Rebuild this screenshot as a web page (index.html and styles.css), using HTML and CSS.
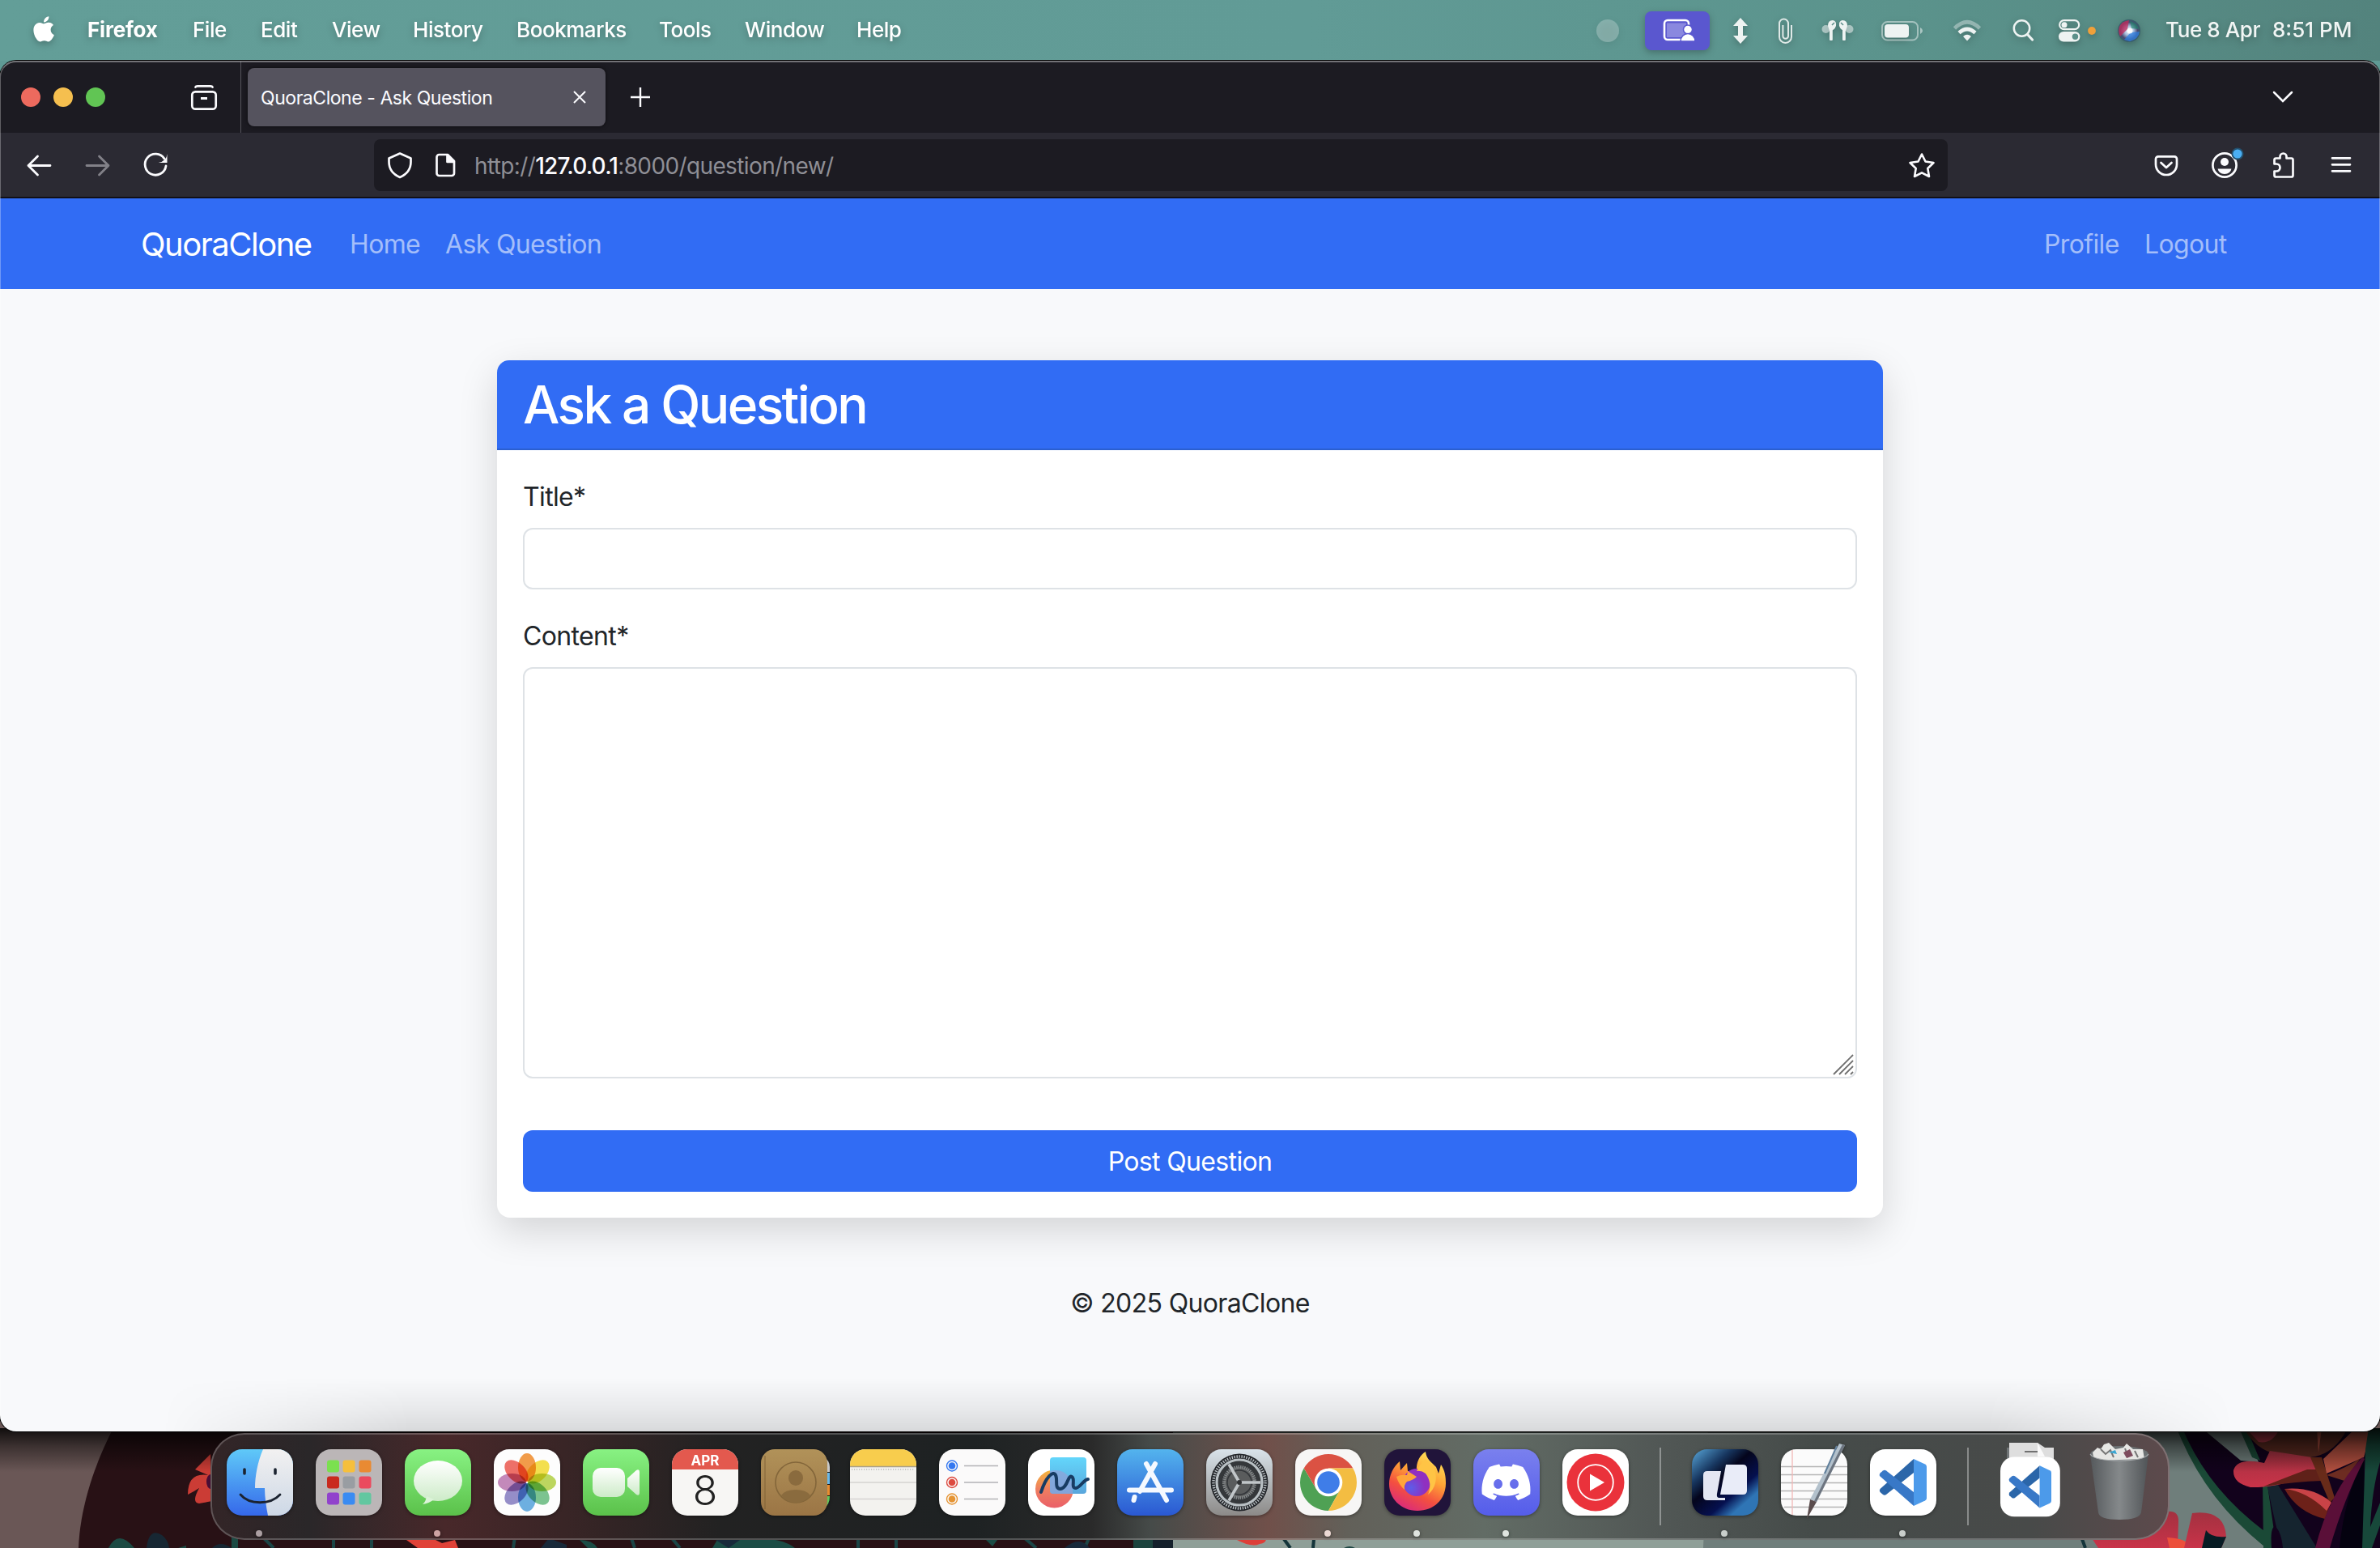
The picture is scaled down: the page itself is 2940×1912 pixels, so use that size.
FILE: index.html
```html
<!DOCTYPE html>
<html lang="en">
<head>
<meta charset="utf-8">
<title>QuoraClone - Ask Question</title>
<link rel="stylesheet" href="styles.css">
</head>
<body>
<div class="desktop">
  <svg class="wallpaper" viewBox="0 1740 2940 172" aria-hidden="true">
    <defs>
      <linearGradient id="shade" x1="0" y1="0" x2="0" y2="1"><stop offset="0" stop-color="#000" stop-opacity=".85"/><stop offset=".4" stop-color="#000" stop-opacity=".45"/><stop offset="1" stop-color="#000" stop-opacity="0"/></linearGradient>
      <linearGradient id="rose" x1="0" y1="0" x2="0" y2="1"><stop offset="0" stop-color="#a33140"/><stop offset="1" stop-color="#c93349"/></linearGradient>
    </defs>
    <rect x="0" y="1740" width="2940" height="172" fill="#6a5756"/>
    <path d="M140 1764C118 1806 99 1860 97 1912H1500V1764Z" fill="#281115"/>
    <path d="M260 1796Q250 1806 241 1815L257 1822Q232 1818 232 1846Q240 1842 246 1838Q236 1856 246 1857L262 1854Z" fill="#cb3c35"/>
    <ellipse cx="260" cy="1830" rx="5" ry="9" fill="#4b0d35"/>
    <path d="M134 1912Q146 1888 166 1912ZM286 1912V1898H294V1912ZM220 1912L230 1909V1912Z" fill="#1c4a43"/>
    <path d="M181 1912Q184 1886 200 1896Q208 1902 209 1912ZM262 1912Q272 1902 286 1912Z" fill="#172733"/>
    <path d="M326 1900L338 1912M412 1900V1912M459 1900V1912M636 1898L634 1912M780 1900L784 1912M830 1900L840 1912M1060 1900V1912M1107 1900V1912M1266 1900L1280 1912M1345 1900L1340 1912" stroke="#1b4546" stroke-width="4"/>
    <path d="M502 1902L516 1912H566L562 1902L546 1906L538 1902Z" fill="#e04238"/>
    <path d="M886 1902Q960 1894 982 1912H880ZM716 1902Q732 1902 738 1912H726ZM1218 1902H1232L1226 1910Z" fill="#1b4c45"/>
    <path d="M668 1912L678 1900L700 1908V1912ZM884 1902H914L900 1912ZM1315 1912Q1334 1896 1346 1912Z" fill="#18293a"/>
    <path d="M1400 1900H1448Q1452 1906 1450 1912H1400Z" fill="#14202b"/><path d="M1400 1900H1424V1912H1400Z" fill="#1c443e"/>
    <path d="M1449 1764H2940V1912H1449Z" fill="#8f9f98"/>
    <path d="M2110 1764H2940V1912H2104Z" fill="#6f7e7b"/>
    <path d="M1526 1901Q1546 1912 1556 1907Q1564 1906 1564 1901Z" fill="#dd3e38"/>
    <path d="M1586 1901L1594 1912M1623 1901L1622 1912M2572 1901L2576 1912" stroke="#14343a" stroke-width="4"/>
    <path d="M1660 1912Q1667 1908 1674 1912Z" fill="#1e4643"/>
    <path d="M2584 1900Q2660 1908 2676 1867Q2692 1865 2691 1880L2690 1912H2592Z" fill="url(#rose)"/>
    <path d="M2677 1899Q2702 1900 2708 1912H2680Z" fill="#ec4f3b"/>
    <path d="M2708 1869Q2748 1864 2750 1898L2744 1912H2698Z" fill="url(#rose)"/>
    <path d="M2725 1890Q2732 1900 2750 1898L2744 1912H2720Z" fill="#071c24"/>
    <path d="M2689 1764H2940V1912H2800Q2724 1846 2689 1764Z" fill="#12021c"/>
    <path d="M2720 1764L2768 1804L2790 1806L2774 1764Z" fill="#6f7e7b"/>
    <path d="M2689 1764H2696Q2728 1842 2804 1896L2797 1910Q2722 1850 2689 1764ZM2766 1764H2775L2792 1804L2782 1800ZM2795 1830L2801 1834L2812 1912H2796Z" fill="#1a4936"/>
    <path d="M2800 1832L2814 1834L2862 1912H2818Q2808 1870 2800 1832Z" fill="#15242f"/>
    <path d="M2806 1912Q2804 1884 2811 1886Q2818 1892 2820 1912Z" fill="#12021c"/>
    <path d="M2772 1764H2900Q2880 1804 2840 1800Q2790 1800 2772 1764Z" fill="#5a2a20"/>
    <path d="M2774 1764H2816Q2808 1784 2790 1781Z" fill="#ad3646"/>
    <path d="M2797 1807L2804 1792L2856 1800L2862 1816Q2820 1838 2780 1837Q2758 1832 2759 1816Q2764 1800 2797 1807Z" fill="url(#rose)"/>
    <path d="M2796 1836Q2826 1824 2850 1815H2864L2868 1829Q2836 1830 2796 1836Z" fill="#5f2119"/>
    <path d="M2854 1800H2868L2884 1850L2878 1856Z" fill="#682b19"/>
    <path d="M2862 1764H2868L2864 1794ZM2910 1764H2930L2920 1800L2874 1820L2870 1802Z" fill="#b35040"/>
    <path d="M2874 1822Q2900 1812 2916 1801L2896 1829Z" fill="#6d2c21"/>
    <path d="M2822 1839Q2838 1868 2872 1876L2880 1854Q2854 1838 2822 1839Z" fill="#6d2119"/>
    <path d="M2822 1839Q2858 1836 2880 1856L2874 1866Q2850 1842 2822 1839Z" fill="#c94347"/>
    <path d="M2890 1912Q2896 1850 2920 1801L2922 1912Z" fill="#04020f"/>
    <path d="M2860 1912Q2878 1842 2918 1800L2921 1802Q2896 1850 2878 1912Z" fill="#5a0f38"/>
    <path d="M2918 1912L2922 1790L2926 1764H2940V1806Q2930 1840 2928 1886L2940 1856V1884L2930 1912Z" fill="#17483a"/>
    <rect x="0" y="1764" width="2940" height="54" fill="url(#shade)"/>
  </svg>

  <header class="menubar">
    <svg class="apple" viewBox="0 0 108 74"><path transform="translate(38.500 19.300) scale(1.300)" fill="#fff" d="M12.152 6.896c-.948 0-2.415-1.078-3.96-1.04-2.04.027-3.91 1.183-4.961 3.014-2.117 3.675-.546 9.103 1.519 12.09 1.013 1.454 2.208 3.09 3.792 3.039 1.52-.065 2.09-.987 3.935-.987 1.831 0 2.35.987 3.96.948 1.637-.026 2.676-1.48 3.676-2.948 1.156-1.688 1.636-3.325 1.662-3.415-.039-.013-3.182-1.221-3.22-4.857-.026-3.04 2.48-4.494 2.597-4.559-1.429-2.09-3.623-2.324-4.39-2.376-2-.156-3.675 1.09-4.61 1.09zM15.53 3.83c.843-1.012 1.4-2.427 1.245-3.83-1.207.052-2.662.805-3.532 1.818-.78.896-1.454 2.338-1.273 3.714 1.338.104 2.715-.688 3.559-1.701"/></svg>
    <nav class="menus">
      <span class="app-name">Firefox</span><span>File</span><span>Edit</span><span>View</span><span>History</span><span>Bookmarks</span><span>Tools</span><span>Window</span><span>Help</span>
    </nav>
    <div class="status">
      <svg width="52" height="74" viewBox="1960 0 52 74"><circle cx="1986" cy="37" r="14" fill="#fff" opacity=".25"/></svg>
      <svg width="120" height="74" viewBox="2012 0 120 74"><rect x="2032" y="13" width="80" height="48" rx="8" fill="#5a57cf"/><path d="M2078 48H2060a4 4 0 0 1-4-4V28a4 4 0 0 1 4-4H2082a4 4 0 0 1 4 4V31" fill="none" stroke="#fff" stroke-width="2.600"/><rect x="2059" y="27.500" width="24" height="17.500" fill="#8a88df"/><circle cx="2085" cy="35.500" r="5.500" fill="#fff" stroke="#5a57cf" stroke-width="1.500"/><path d="M2076 50a9 9.500 0 0 1 18 0Z" fill="#fff" stroke="#5a57cf" stroke-width="1.500"/></svg>
      <svg width="38" height="74" viewBox="2132 0 38 74"><path d="M2150 21L2159 31H2153V43H2159L2150 53L2141 43H2147V31H2141Z" fill="#eef3f2"/></svg>
      <svg width="60" height="74" viewBox="2170 0 60 74"><path d="M2213 30V44.500a7.500 7.500 0 0 1-15 0V28a5.500 5.500 0 0 1 11 0V43.500a3.300 3.300 0 0 1-6.600 0V30" fill="none" stroke="#dfe9e7" stroke-width="2"/></svg>
      <svg width="78" height="74" viewBox="2230 0 78 74"><g fill="#eef3f2"><circle cx="2255.500" cy="35" r="5" opacity=".55"/><circle cx="2284.500" cy="35" r="5" opacity=".55"/><path d="M2258 31Q2258 24 2264 24Q2269 25 2268 31Q2266 37 2260 37ZM2282 31Q2282 24 2276 24Q2271 25 2272 31Q2274 37 2280 37Z"/><rect x="2260" y="35" width="3.800" height="14" rx="1"/><rect x="2276" y="35" width="3.800" height="14" rx="1"/></g><path d="M2263 30L2266 27M2277 30L2274 27" stroke="#5f8f8a" stroke-width="1.600"/></svg>
      <svg width="86" height="74" viewBox="2308 0 86 74"><rect x="2325" y="26" width="44" height="22.500" rx="6.500" fill="none" stroke="#fff" stroke-opacity=".45" stroke-width="2"/><rect x="2328" y="29" width="30" height="16.500" rx="4" fill="#eef3f2"/><path d="M2372 33q3 1.500 3 4t-3 4Z" fill="#fff" opacity=".5"/></svg>
      <svg width="72" height="74" viewBox="2394 0 72 74"><g fill="none" stroke="#eef3f2" stroke-width="4.600"><path d="M2414.500 34Q2430 18.500 2445.500 34" opacity=".4"/><path d="M2420 39.500Q2430 30.500 2440 39.500"/></g><path d="M2425 44Q2430 39.500 2435 44L2430 49.500Z" fill="#eef3f2"/></svg>
      <svg width="62" height="74" viewBox="2466 0 62 74"><g fill="none" stroke="#eef3f2" stroke-linecap="round"><circle cx="2497.500" cy="34" r="9.700" stroke-width="2.500"/><path d="M2504.500 41.500L2510.500 48" stroke-width="3.200"/></g></svg>
      <svg width="76" height="74" viewBox="2528 0 76 74"><rect x="2544.200" y="24.200" width="24" height="11" rx="5.500" fill="none" stroke="#eef3f2" stroke-width="2.200"/><circle cx="2550" cy="29.700" r="3.500" fill="#eef3f2"/><rect x="2543" y="38" width="26.400" height="12.500" rx="6.200" fill="#eef3f2"/><circle cx="2563.500" cy="44.200" r="3.700" fill="#5b908a"/><circle cx="2584" cy="37" r="4.900" fill="#f0a03a"/></svg>
      <svg width="73" height="74" viewBox="2604 0 73 74"><defs><radialGradient id="siri"><stop offset="0" stop-color="#fff"/><stop offset=".4" stop-color="#a9bfdc"/><stop offset=".75" stop-color="#4a4a72"/><stop offset="1" stop-color="#35606a"/></radialGradient></defs><circle cx="2630" cy="37" r="14" fill="url(#siri)"/><path d="M2618 32Q2621 25 2630 24L2628 35L2619 44Q2616 38 2618 32Z" fill="#c22b5c" opacity=".75"/><path d="M2632 39L2643 38Q2642 47 2631 50L2624 48Z" fill="#2d7fe0" opacity=".75"/><path d="M2631 25Q2641 28 2642 35L2633 34Z" fill="#1a8a6a" opacity=".6"/><circle cx="2631" cy="37" r="3.500" fill="#fff" opacity=".85"/></svg>
    </div>
    <time class="clock"><span class="date">Tue 8 Apr</span><span class="hour">8:51 PM</span></time>
  </header>

  <main class="window">
    <div class="tabstrip">
      <div class="lights"><i class="close"></i><i class="min"></i><i class="max"></i></div>
      <svg class="view" width="38" height="36" viewBox="233 102 38 36"><g fill="none" stroke="#fbfbfe" stroke-width="2.700" stroke-linecap="round"><rect x="237.300" y="113.300" width="29.400" height="21.400" rx="4"/><path d="M241.500 107.500Q242 106.300 244 106.300H260Q262 106.300 262.500 107.500"/></g><rect x="248" y="120" width="8" height="3" fill="#fbfbfe"/></svg>
      <div class="tab"><span class="tab-title">QuoraClone - Ask Question</span><svg width="18" height="18" viewBox="0 0 18 18"><path d="M2 2L16 16M16 2L2 16" stroke="#fbfbfe" stroke-width="2"/></svg></div>
      <svg class="plus" width="24" height="24" viewBox="0 0 24 24"><path d="M12 0V24M0 12H24" stroke="#fbfbfe" stroke-width="2.400"/></svg>
      <svg class="chev" width="28" height="16" viewBox="0 0 28 16"><path d="M3 2L14 13L25 2" fill="none" stroke="#fbfbfe" stroke-width="2.500" stroke-linecap="round"/></svg>
    </div>
    <div class="toolbar">
      <svg width="462" height="80" viewBox="0 164 462 80"><g fill="none" stroke="#fbfbfe" stroke-width="2.800" stroke-linecap="round" stroke-linejoin="round"><path d="M62 204.500H35M46.500 193L35 204.500L46.500 216"/><path d="M107 204.500H134M122.500 193L134 204.500L122.500 216" opacity=".42"/><path d="M203 196A13 13 0 1 0 205 205"/></g><path d="M206.500 190V201H195.500Q206 199 206.500 190Z" fill="#fbfbfe"/></svg>
      <div class="urlbar">
        <svg width="124" height="64" viewBox="462 172 124 64"><g fill="none" stroke="#fbfbfe" stroke-width="2.700" stroke-linejoin="round"><path d="M494 189.500L507.500 195.500V200C507.500 209 503 215 494 219C485 215 480.500 209 480.500 200V195.500Z"/><path d="M539.500 194a3 3 0 0 1 3-3H553L561 199V214a3 3 0 0 1-3 3H542.500a3 3 0 0 1-3-3Z"/><path d="M552.500 191V200H561" fill="#fbfbfe"/></g></svg>
        <span class="url">http://<b>127.0.0.1</b>:8000/question/new/</span>
        <svg class="star" width="36" height="36" viewBox="2356 186 36 36"><path d="M2374 190.500L2378.500 199.500L2388.500 201L2381.300 208L2383 218L2374 213.300L2365 218L2366.700 208L2359.500 201L2369.500 199.500Z" fill="none" stroke="#fbfbfe" stroke-width="2.600" stroke-linejoin="round"/></svg>
      </div>
      <svg width="534" height="80" viewBox="2406 164 534 80"><g fill="none" stroke="#fbfbfe" stroke-width="2.700" stroke-linecap="round" stroke-linejoin="round"><path d="M2666 193.300H2686a3 3 0 0 1 3 3V203a13 13 0 0 1-26 0V196.300a3 3 0 0 1 3-3ZM2669.500 201L2676 207L2682.500 201"/><circle cx="2748" cy="204" r="14.600"/><path d="M2809.500 200V197.500a2 2 0 0 1 2-2H2816.500V193.500a4 4 0 0 1 8 0V195.500H2830.500a2 2 0 0 1 2 2V216.500a2 2 0 0 1-2 2H2811.500a2 2 0 0 1-2-2V211.500H2812a4.500 4.500 0 0 0 0-9H2809.500Z"/><path d="M2881 195.300H2903M2881 203.300H2903M2881 211.300H2903"/></g><circle cx="2748" cy="200" r="5" fill="#fbfbfe"/><path d="M2739.500 208.500H2756.500Q2755 215 2748 215T2739.500 208.500Z" fill="#fbfbfe"/><circle cx="2764" cy="190" r="7.500" fill="#23506e"/><circle cx="2764" cy="190" r="5.600" fill="#4aaef3"/></svg>
    </div>
    <nav class="navbar">
      <a class="brand">QuoraClone</a><a class="home">Home</a><a class="ask">Ask Question</a>
      <a class="profile">Profile</a><a class="logout">Logout</a>
    </nav>
    <section class="content">
      <form class="card">
        <div class="card-head"><h2>Ask a Question</h2></div>
        <div class="card-body">
          <label>Title*</label>
          <div class="input"></div>
          <label>Content*</label>
          <div class="textarea"><svg width="26" height="26" viewBox="0 0 26 26"><path d="M1 25L25 1M8 25L25 8M15 25L25 15M22 25L25 22" stroke="#6f6f6f" stroke-width="1.900"/></svg></div>
          <div class="button"><span>Post Question</span></div>
        </div>
      </form>
      <footer><span>© 2025 QuoraClone</span></footer>
    </section>
    <div class="dock-shade"></div>
  </main>

  <div class="dock">
    <svg class="app" viewBox="0 0 82 82"><defs><linearGradient id="fb" x1="0" y1="0" x2="0" y2="1"><stop offset="0" stop-color="#5fc9f8"/><stop offset="1" stop-color="#3568ea"/></linearGradient><linearGradient id="fw" x1="0" y1="0" x2="0" y2="1"><stop offset="0" stop-color="#f2f1f1"/><stop offset="1" stop-color="#cdd8e6"/></linearGradient><clipPath id="sq"><rect width="82" height="82" rx="19"/></clipPath></defs><g clip-path="url(#sq)"><rect width="82" height="82" fill="url(#fb)"/><path d="M45 0C38 16 35 34 35 48H47C47 60 49 72 51 82H82V0Z" fill="url(#fw)"/></g><g stroke="#1b2330" stroke-linecap="round" fill="none"><path d="M22 25V30M60 25V30" stroke-width="3.600"/><path d="M17 56C28 69 54 69 66 56" stroke-width="2.800"/></g><circle cx="40" cy="104" r="4" fill="#ab9fa2"/></svg>
    <svg class="app" viewBox="0 0 82 82"><rect width="82" height="82" rx="19" fill="#bbb6b7"/><g><rect x="14" y="13.500" width="15" height="15" rx="3" fill="#7be04f"/><rect x="33.500" y="13.500" width="15" height="15" rx="3" fill="#f6bf3c"/><rect x="53.500" y="13.500" width="15" height="15" rx="3" fill="#e98a32"/><rect x="14" y="33.500" width="15" height="15" rx="3" fill="#c92a1e"/><rect x="33.500" y="33.500" width="15" height="15" rx="3" fill="#999da2"/><rect x="53.500" y="33.500" width="15" height="15" rx="3" fill="#ea4a5e"/><rect x="14" y="53.500" width="15" height="15" rx="3" fill="#9142cc"/><rect x="33.500" y="53.500" width="15" height="15" rx="3" fill="#3a8bf2"/><rect x="53.500" y="53.500" width="15" height="15" rx="3" fill="#62c7a0"/></g></svg>
    <svg class="app" viewBox="0 0 82 82"><defs><linearGradient id="green" x1="0" y1="0" x2="0" y2="1"><stop offset="0" stop-color="#88f283"/><stop offset="1" stop-color="#5bc14a"/></linearGradient><linearGradient id="bub" x1="0" y1="0" x2="0" y2="1"><stop offset="0" stop-color="#fff"/><stop offset="1" stop-color="#cdebc8"/></linearGradient></defs><rect width="82" height="82" rx="19" fill="url(#green)"/><ellipse cx="41" cy="39" rx="30" ry="25" fill="url(#bub)"/><path d="M27 58Q26 65 22 68Q30 67 36 62Z" fill="#dcf3d8"/><circle cx="40" cy="104" r="4" fill="#cda3a3"/></svg>
    <svg class="app" viewBox="0 0 82 82"><rect width="82" height="82" rx="19" fill="#fdfdfd"/><g class="petals"><ellipse cx="41" cy="22.500" rx="11" ry="17.500" fill="#f2953a"/><ellipse cx="41" cy="22.500" rx="11" ry="17.500" fill="#f5df3f" transform="rotate(45 41 41)"/><ellipse cx="41" cy="22.500" rx="11" ry="17.500" fill="#b9d552" transform="rotate(90 41 41)"/><ellipse cx="41" cy="22.500" rx="11" ry="17.500" fill="#72c088" transform="rotate(135 41 41)"/><ellipse cx="41" cy="22.500" rx="11" ry="17.500" fill="#62abe0" transform="rotate(180 41 41)"/><ellipse cx="41" cy="22.500" rx="11" ry="17.500" fill="#8d85c6" transform="rotate(225 41 41)"/><ellipse cx="41" cy="22.500" rx="11" ry="17.500" fill="#c080b6" transform="rotate(270 41 41)"/><ellipse cx="41" cy="22.500" rx="11" ry="17.500" fill="#ee655c" transform="rotate(315 41 41)"/></g></svg>
    <svg class="app" viewBox="0 0 82 82"><rect width="82" height="82" rx="19" fill="url(#green)"/><rect x="12" y="23" width="40" height="36" rx="10" fill="url(#bub)"/><path d="M55 36L66 26Q70 24 70 28V54Q70 58 66 56L55 46Z" fill="url(#bub)"/></svg>
    <svg class="app" viewBox="0 0 82 82"><rect width="82" height="82" rx="19" fill="#f7f6f4"/><path d="M0 25V19A19 19 0 0 1 19 0H63A19 19 0 0 1 82 19V25Z" fill="#e3594e"/><text x="41" y="19.500" text-anchor="middle" class="cal-m">APR</text><text x="41" y="69" text-anchor="middle" class="cal-d">8</text></svg>
    <svg class="app" viewBox="0 0 82 82"><defs><linearGradient id="ct" x1="0" y1="0" x2="0" y2="1"><stop offset="0" stop-color="#b19259"/><stop offset="1" stop-color="#9b7545"/></linearGradient></defs><path d="M78 10Q85 14 85 22V28H78Z" fill="#c9c9c9"/><path d="M78 29H85V43H78Z" fill="#69b9ea"/><path d="M78 44H85V57H78Z" fill="#ea8c2f"/><path d="M78 58H85Q85 68 78 73Z" fill="#61c95b"/><rect width="82" height="82" rx="17" fill="url(#ct)"/><path d="M5 8V74" stroke="#7d5f34" stroke-width="1.500" opacity=".6"/><circle cx="43" cy="41" r="25" fill="none" stroke="#83663a" stroke-width="1.600"/><ellipse cx="43" cy="35.500" rx="9" ry="9.500" fill="#8a6b3e"/><path d="M25 57Q30 50 43 50T61 57Q54 66 43 66T25 57Z" fill="#8a6b3e"/></svg>
    <svg class="app" viewBox="0 0 82 82"><rect width="82" height="82" rx="19" fill="#f3f2ef"/><path d="M0 21V19A19 19 0 0 1 19 0H63A19 19 0 0 1 82 19V21Z" fill="#f8cd4d"/><path d="M0 21.500H82" stroke="#a8a08a" stroke-width="1.400"/><path d="M2 25H80" stroke="#bbb" stroke-width="1.600" stroke-dasharray="1.200 1.800"/><path d="M0 41H82M0 61.500H82" stroke="#d5d4d1" stroke-width="1.500"/></svg>
    <svg class="app" viewBox="0 0 82 82"><rect width="82" height="82" rx="19" fill="#fbfafa"/><path d="M31 20.500H73M31 41H73M31 61.500H73" stroke="#b3b3b6" stroke-width="1.300"/><g stroke-width="1.400"><g fill="none"><circle cx="16" cy="20.500" r="6.500" stroke="#3377f0"/><circle cx="16" cy="41" r="6.500" stroke="#dd4b40"/><circle cx="16" cy="61.500" r="6.500" stroke="#e59433"/></g><circle cx="16" cy="20.500" r="4.300" fill="#3377f0"/><circle cx="16" cy="41" r="4.300" fill="#dd4b40"/><circle cx="16" cy="61.500" r="4.300" fill="#e59433"/></g></svg>
    <svg class="app" viewBox="0 0 82 82"><defs><linearGradient id="ffa" x1="0" y1="0" x2="0" y2="1"><stop offset="0" stop-color="#f4b63c"/><stop offset=".5" stop-color="#ef7f60"/><stop offset="1" stop-color="#ea5f68"/></linearGradient><linearGradient id="ffc" x1="0" y1="0" x2="0" y2="1"><stop offset="0" stop-color="#63d6fb"/><stop offset="1" stop-color="#5aa6dc"/></linearGradient></defs><rect width="82" height="82" rx="19" fill="#fff"/><circle cx="32.500" cy="49" r="23.500" fill="url(#ffa)"/><rect x="27" y="10" width="45" height="45" rx="4" fill="url(#ffc)"/><path d="M27 27Q46 22 55 42V55H31Q27 55 27 51Z" fill="#8fa3d8" opacity=".75"/><path d="M16 53C22 34 31 26 34 32C37 38 32 49 40 49C49 48 49 31 54 34C59 37 52 48 59 48C65 47 68 38 74 37" fill="none" stroke="#183c63" stroke-width="4" stroke-linecap="round"/></svg>
    <svg class="app" viewBox="0 0 82 82"><defs><linearGradient id="as" x1="0" y1="0" x2="0" y2="1"><stop offset="0" stop-color="#53b4ee"/><stop offset="1" stop-color="#2a58d2"/></linearGradient></defs><rect width="82" height="82" rx="19" fill="url(#as)"/><g stroke="#f5f9ff" stroke-width="6" stroke-linecap="round"><path d="M47 18L28 52M36 18L61 63M15 50.500H67M21.500 59L20.500 63"/></g></svg>
    <svg class="app" viewBox="0 0 82 82"><defs><linearGradient id="st" x1="0" y1="0" x2="0" y2="1"><stop offset="0" stop-color="#d9e3ea"/><stop offset="1" stop-color="#8c8a88"/></linearGradient></defs><rect width="82" height="82" rx="19" fill="url(#st)"/><circle cx="41" cy="41" r="35.500" fill="#23262a"/><circle cx="41" cy="41" r="32" fill="none" stroke="#b9bfc3" stroke-width="3.500" stroke-dasharray="1.400 1.600"/><circle cx="41" cy="41" r="28" fill="#34373a" stroke="#b9c0c4" stroke-width="3.200"/><circle cx="41" cy="41" r="19" fill="#5a5c5d" stroke="#85898b" stroke-width="4" stroke-dasharray="1.500 1"/><circle cx="41" cy="41" r="15" fill="none" stroke="#33363a" stroke-width="1.500"/><path d="M41 41H67M41 41L28 18.500M41 41L28 63.500" stroke="#c1c6c9" stroke-width="3.600"/><circle cx="41" cy="41" r="3" fill="#303234"/></svg>
    <svg class="app" viewBox="0 0 82 82"><rect width="82" height="82" rx="19" fill="#f7f6f5"/><path d="M41 41L26 49L10.700 23.500A35 35 0 0 0 41 76L56 49Z" fill="#4fa154"/><path d="M41 41L10.700 23.500A35 35 0 0 1 71.300 23.500H41Z" fill="#db5243"/><path d="M41 23.500H71.300A35 35 0 0 1 41 76L56 49Z" fill="#f3bd42"/><path d="M10.700 23.500L26 49L41 30V23.500Z" fill="#db5243"/><circle cx="41" cy="41" r="17.300" fill="#fff"/><circle cx="41" cy="41" r="13.800" fill="#3f7de8"/><circle cx="40" cy="104" r="4" fill="#ecd9d4"/></svg>
    <svg class="app" viewBox="0 0 82 82"><defs><linearGradient id="fx" x1=".8" y1="0" x2=".3" y2="1"><stop offset="0" stop-color="#ffe85a"/><stop offset=".4" stop-color="#ffa436"/><stop offset=".7" stop-color="#f4503f"/><stop offset="1" stop-color="#d92a7c"/></linearGradient><radialGradient id="fp" cx=".3" cy=".7"><stop offset="0" stop-color="#5e5ce8"/><stop offset="1" stop-color="#9030c0"/></radialGradient></defs><rect width="82" height="82" rx="19" fill="#21143a"/><path d="M41 76C20 76 6 60 6 43C6 32 11 22 19 15L20 26L28 17L29 27H40C39 16 44 7 51 3C52 12 57 15 64 22L67 30L70 19C75 26 76 34 76 42C76 62 61 76 41 76Z" fill="url(#fx)"/><path d="M29 27Q34 24 40 27Q42 15 51 9V30Z" fill="#21143a" opacity="0"/><circle cx="40" cy="41" r="17" fill="url(#fp)"/><path d="M15 34Q20 31 28 32L29 27L40 34Q36 38 28 40Q24 44 25 50Q18 44 15 34Z" fill="#ffa53a"/><path d="M40 27Q44 18 51 12L62 24Q68 44 54 56Q60 42 51 30Q46 26 40 27Z" fill="#ffc445"/><circle cx="40" cy="104" r="4" fill="#dfe4df"/></svg>
    <svg class="app" viewBox="0 0 82 82"><defs><linearGradient id="dc" x1="0" y1="0" x2="0" y2="1"><stop offset="0" stop-color="#7a80ee"/><stop offset="1" stop-color="#555dea"/></linearGradient></defs><rect width="82" height="82" rx="19" fill="url(#dc)"/><path transform="translate(10.500 11.500) scale(2.500 2.430)" fill="#fff" d="M20.317 4.3698a19.7913 19.7913 0 00-4.8851-1.5152.0741.0741 0 00-.0785.0371c-.211.3753-.4447.8648-.6083 1.2495-1.8447-.2762-3.68-.2762-5.4868 0-.1636-.3933-.4058-.8742-.6177-1.2495a.077.077 0 00-.0785-.037 19.7363 19.7363 0 00-4.8852 1.515.0699.0699 0 00-.0321.0277C.5334 9.0458-.319 13.5799.0992 18.0578a.0824.0824 0 00.0312.0561c2.0528 1.5076 4.0413 2.4228 5.9929 3.0294a.0777.0777 0 00.0842-.0276c.4616-.6304.8731-1.2952 1.226-1.9942a.076.076 0 00-.0416-.1057c-.6528-.2476-1.2743-.5495-1.8722-.8923a.077.077 0 01-.0076-.1277c.1258-.0943.2517-.1923.3718-.2914a.0743.0743 0 01.0776-.0105c3.9278 1.7933 8.18 1.7933 12.0614 0a.0739.0739 0 01.0785.0095c.1202.099.246.1981.3728.2924a.077.077 0 01-.0066.1276 12.2986 12.2986 0 01-1.873.8914.0766.0766 0 00-.0407.1067c.3604.698.7719 1.3628 1.225 1.9932a.076.076 0 00.0842.0286c1.961-.6067 3.9495-1.5219 6.0023-3.0294a.077.077 0 00.0313-.0552c.5004-5.177-.8382-9.6739-3.5485-13.6604a.061.061 0 00-.0312-.0286zM8.02 15.3312c-1.1825 0-2.1569-1.0857-2.1569-2.419 0-1.3332.9555-2.4189 2.157-2.4189 1.2108 0 2.1757 1.0952 2.1568 2.419 0 1.3332-.9555 2.4189-2.1569 2.4189zm7.9748 0c-1.1825 0-2.1569-1.0857-2.1569-2.419 0-1.3332.9554-2.4189 2.1569-2.4189 1.2108 0 2.1757 1.0952 2.1568 2.419 0 1.3332-.946 2.4189-2.1568 2.4189Z"/><circle cx="40" cy="104" r="4" fill="#dfe4df"/></svg>
    <svg class="app" viewBox="0 0 82 82"><rect width="82" height="82" rx="19" fill="#fff"/><circle cx="41" cy="41" r="35.500" fill="#ea323b"/><circle cx="41" cy="41" r="21.800" fill="none" stroke="#fff" stroke-width="1.800"/><path d="M34 30.500V51.500L52 41Z" fill="#fff"/></svg>
    <i class="rule"></i>
    <svg class="app" viewBox="0 0 82 82"><defs><linearGradient id="mir" x1="0" y1=".1" x2=".7" y2=".9"><stop offset="0" stop-color="#4d93c4"/><stop offset=".3" stop-color="#17365f"/><stop offset=".5" stop-color="#04051c"/><stop offset=".8" stop-color="#05104f"/><stop offset="1" stop-color="#2f75b5"/></linearGradient></defs><rect width="82" height="82" rx="19" fill="url(#mir)"/><path d="M19 27H36L31 55Q30 60 34 60H41V63H19Q14 63 14 58V32Q14 27 19 27Z" fill="#e4e7f3"/><path d="M42 19H63Q68 19 68 24V51Q68 56 63 56H35Z" fill="#e9ecf8"/><circle cx="40" cy="104" r="4" fill="#c9cecb"/></svg>
    <svg class="app" viewBox="0 0 82 82"><rect width="82" height="82" rx="19" fill="#fbfbfb"/><path d="M0 21.500H82M0 31.500H82M0 41.500H82M0 51.500H82M0 61.500H82M4 71.500H78" stroke="#b5b5b5" stroke-width="1.300"/><path d="M14 1V81" stroke="#f2b7b5" stroke-width="1.300"/><path d="M72-7L79-5L44 65L36 62Z" fill="#b3c1cc"/><path d="M76-6L79-5L44 65L41 64Z" fill="#6d7580"/><path d="M36 62L44 65L32 86Z" fill="#5b4d4e"/><path d="M69-4L54 30" stroke="#62809c" stroke-width="2"/></svg>
    <svg class="app" viewBox="0 0 82 82"><g id="code"><rect width="82" height="82" rx="19" fill="#fff"/><path d="M54 12V29L20 56Q18 57.500 16 56L12.500 53Q11 51 12.500 49Z" fill="#2b66a9"/><path d="M54 70V53L20 26.500Q18 25 16 26.500L12.500 29.500Q11 31.500 12.500 33.500Z" fill="#3878c7"/><path d="M54 12L68 18.500Q70 19.500 70 21.500V60.500Q70 62.500 68 63.500L54 70Z" fill="#4c9aea"/></g><circle cx="40" cy="104" r="4" fill="#c9cecb"/></svg>
    <i class="rule"></i>
    <svg class="mini" viewBox="0 0 74 92"><path d="M8 6H48V30H8Z" fill="#707577"/><path d="M11 0H46L55 6H66V30H11Z" fill="#dedede"/><path d="M46 0L55 17H46Z" fill="#fafafa"/><path d="M30 11H46" stroke="#555" stroke-width="1.600"/><g transform="translate(0 17.500) scale(.9)"><use href="#code"/></g></svg>
    <svg class="trash" viewBox="0 0 74 96"><defs><linearGradient id="tr"><stop offset="0" stop-color="#55595c"/><stop offset=".5" stop-color="#85898b"/><stop offset="1" stop-color="#505457"/></linearGradient></defs><ellipse cx="37" cy="14" rx="36" ry="10" fill="#6c7173"/><path d="M4 12L10 6L14 8L18 2L24 0L32 8L42 6L46 1L54 8L66 8L68 20L6 22Z" fill="#e6e6e4"/><path d="M14 8L20 14L26 9L30 18M44 7L48 18M56 10L60 18" stroke="#777" stroke-width="2" fill="none"/><path d="M24 12L32 9L34 14Z" fill="#3ca6d2"/><path d="M42 12L50 8L54 16L46 19Z" fill="#7d4b5d"/><path d="M1 14Q6 22 37 22T73 14L64 86Q62 95 37 95T11 86Z" fill="url(#tr)"/><path d="M1 14Q6 22 37 22T73 14" fill="none" stroke="#a9adaf" stroke-width="1.200"/></svg>
  </div>
</div>
</body>
</html>
```
FILE: styles.css
```css
* { box-sizing: border-box; }
body { margin: 0; font-family: Inter, "Liberation Sans", sans-serif; }
svg { display: block; flex: none; }
.desktop { position: relative; width: 2940px; height: 1912px; overflow: hidden; background: #5f9a95; }
.wallpaper { position: absolute; left: 0; top: 1740px; width: 2940px; height: 172px; }

.menubar { display: flex; align-items: center; height: 75px; background: linear-gradient(90deg, #639e98 0, #619b96 55%, #5b938c 80%, #53837d 100%); color: #fff; font-size: 26px; font-weight: 500; white-space: nowrap; }
.menubar svg, .menus, .clock { filter: drop-shadow(0 3px 4px rgba(0, 0, 0, .25)); }
.apple { width: 108px; height: 74px; }
.menus { display: grid; grid-template-columns: 130px 84px 88px 100px 128px 176px 106px 138px 60px; width: 1852px; padding-bottom: 2px; letter-spacing: -.45px; }
.app-name { font-weight: 700; letter-spacing: -.2px; }
.status { display: flex; width: 715px; }
.clock { display: flex; padding-bottom: 2px; color: #f1f5f4; letter-spacing: -.4px; }
.date { width: 132px; }
.hour { letter-spacing: 0; }

.window { position: relative; height: 1693px; background: #f8f9fb; border-radius: 20px; overflow: hidden; box-shadow: 0 0 0 1px #000; }
.window::after { content: ""; position: absolute; inset: 0; border: 1px solid rgba(255, 255, 255, .3); border-top: 2px solid rgba(255, 255, 255, .38); border-bottom: 0; border-radius: 20px; }
.tabstrip { display: flex; align-items: center; height: 89px; background: #1c1b22; }
.lights { display: flex; gap: 16px; margin-left: 26px; width: 207px; }
.lights i { width: 24px; height: 24px; border-radius: 50%; }
.close { background: #ed6a5e; }
.min { background: #f5bf4f; }
.max { background: #61c554; }
.view { margin-right: 26px; }
.tab { position: relative; display: flex; align-items: center; justify-content: space-between; width: 442px; height: 72px; padding: 0 23px 0 16px; margin-left: 9px; border-radius: 8px; background: #55535e; color: #fbfbfe; font-size: 23px; box-shadow: 0 0 5px rgba(0, 0, 0, .6); white-space: nowrap; }
.tab-title { padding-top: 3px; letter-spacing: -.45px; }
.tab::before { content: ""; position: absolute; left: -9px; top: -8px; width: 1px; height: 88px; background: #55545c; }
.plus { margin-left: 31px; }
.chev { margin-left: 2003px; }
.toolbar { display: flex; align-items: center; height: 81px; background: #2b2a33; border-bottom: 2px solid #111017; }
.urlbar { display: flex; align-items: center; width: 1944px; height: 64px; border-radius: 8px; background: #1c1b22; color: #8f8f96; font-size: 28px; }
.url { padding-top: 2px; letter-spacing: -.62px; }
.urlbar b { font-weight: 500; color: #fbfbfe; letter-spacing: -.8px; }
.star { margin-left: auto; margin-right: 14px; }

.navbar { display: flex; align-items: center; height: 112px; padding: 0 190px 0 174px; background: #316cf4; color: rgba(255, 255, 255, .56); font-size: 32px; letter-spacing: -.64px; white-space: nowrap; }
.brand { width: 258px; color: #fff; font-size: 40px; letter-spacing: -1.5px; }
.home { width: 118px; }
.profile { margin-left: auto; width: 124px; }
.logout { width: 101px; }

.content { display: flex; flex-direction: column; align-items: center; padding-top: 88px; color: #212529; font-size: 32px; letter-spacing: -.64px; }
.card { width: 1712px; height: 1059px; border-radius: 16px; background: #fff; box-shadow: 0 16px 48px rgba(0, 0, 0, .15); }
.card-head { height: 111px; padding: 16px 32px; border-radius: 15px 15px 0 0; border-bottom: 2px solid #2b5fd0; background: #316cf4; color: #fff; }
h2 { margin: 0; font-size: 64px; line-height: 78px; font-weight: 550; letter-spacing: -2.6px; white-space: nowrap; }
.card-body { display: flex; flex-direction: column; padding: 32px; }
label { line-height: 48px; padding-top: 2px; margin-bottom: 14px; align-self: flex-start; }
.input { height: 76px; margin-bottom: 32px; border: 2px solid #dee2e6; border-radius: 12px; }
.textarea { display: flex; align-items: flex-end; justify-content: flex-end; height: 508px; padding: 2px; margin-bottom: 64px; border: 2px solid #dee2e6; border-radius: 12px; }
.button { display: flex; align-items: center; justify-content: center; height: 76px; border-radius: 12px; background: #316cf4; color: #fff; }
footer { margin-top: 82px; line-height: 48px; }
.dock-shade { position: absolute; left: 200px; bottom: 0; width: 2560px; height: 66px; background: linear-gradient(0deg, rgba(0, 0, 0, .125), rgba(0, 0, 0, .06) 45%, transparent); mask-image: linear-gradient(90deg, transparent, #000 12%, #000 88%, transparent); }

.dock { position: absolute; left: 260px; top: 1770px; display: flex; align-items: flex-start; width: 2420px; height: 132px; padding: 18px 0 0 18px; border: 2px solid rgba(255, 255, 255, .22); border-radius: 42px; background: linear-gradient(90deg, #332527 0, #2a2729 5%, #48282a 12%, #392526 18%, #222222 26%, #1e2223 39%, #2a2a2a 45%, #464b49 48%, #70504a 54%, #626059 58%, #626c65 65%, #515755 74%, #454b49 82%, #484a49 93%, #5d4a4c 100%); background-origin: border-box; }
.app { width: 82px; height: 82px; margin-right: 28px; overflow: visible; filter: drop-shadow(0 1px 2px rgba(0, 0, 0, .4)); }
.rule { width: 2px; height: 96px; margin: -2px 38px 0 10px; background: rgba(255, 255, 255, .36); flex: none; }
.mini { width: 74px; height: 92px; margin: -8px 36px 0 1px; }
.trash { width: 74px; height: 96px; margin-top: -8px; }
.petals ellipse { mix-blend-mode: multiply; opacity: .92; }
.cal-m { font-size: 17px; font-weight: 700; fill: #fff; }
.cal-d { font-size: 50px; font-weight: 300; fill: #222; }
```
